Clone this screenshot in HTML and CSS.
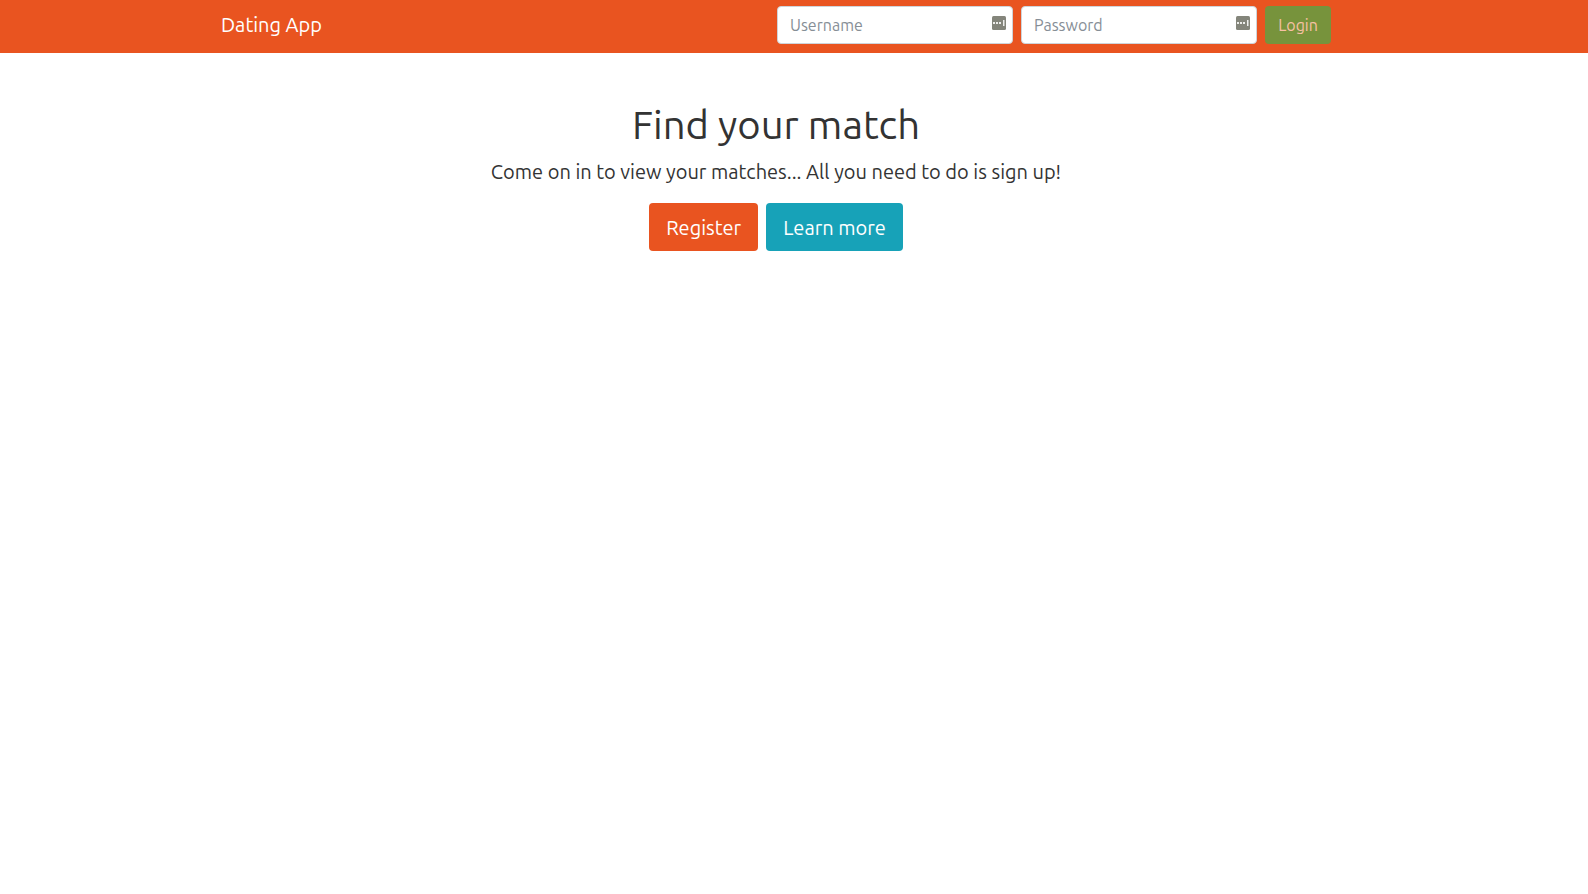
FILE: index.html
```html
<!DOCTYPE html>
<html lang="en">
<head>
<meta charset="utf-8">
<meta name="viewport" content="width=device-width, initial-scale=1">
<title>Dating App</title>
<link rel="stylesheet" href="styles.css">
</head>
<body>
<header class="navbar">
  <div class="container navbar-inner">
    <a class="brand" href="#">Dating App</a>
    <form class="login-form">
      <div class="field">
        <input class="form-control" type="text" name="username" placeholder="Username" aria-label="Username">
        <svg class="field-icon" viewBox="0 0 14 14" aria-hidden="true"><rect width="14" height="14" rx="1.5" fill="#84857b"/><path d="M1 6h2v2H1zM4 6h2v2H4zM7 6h2v2H7zM11 4h1.5v6H11z" fill="#fff" fill-opacity=".85"/></svg>
      </div>
      <div class="field">
        <input class="form-control" type="password" name="password" placeholder="Password" aria-label="Password">
        <svg class="field-icon" viewBox="0 0 14 14" aria-hidden="true"><rect width="14" height="14" rx="1.5" fill="#84857b"/><path d="M1 6h2v2H1zM4 6h2v2H4zM7 6h2v2H7zM11 4h1.5v6H11z" fill="#fff" fill-opacity=".85"/></svg>
      </div>
      <button class="btn btn-login" type="submit" disabled>Login</button>
    </form>
  </div>
</header>
<main class="page">
  <section class="container hero">
    <h1 class="title">Find your match</h1>
    <p class="lead">Come on in to view your matches... All you need to do is sign up!</p>
    <div class="actions">
      <button class="btn btn-lg btn-register" type="button">Register</button>
      <button class="btn btn-lg btn-info" type="button">Learn more</button>
    </div>
  </section>
</main>
</body>
</html>
```
FILE: styles.css
```css
*, *::before, *::after { box-sizing: border-box; }

body {
  margin: 0;
  background: #fff;
  color: #333;
  font-family: Ubuntu, "Noto Sans", sans-serif;
  font-size: 16px;
  line-height: 24px;
}

.navbar {
  padding: 6px 36px 9px 0;
  background: #e95420;
}

.page {
  padding: 48px 36px 0 0;
}

.container {
  width: 100%;
  max-width: 1140px;
  margin: 0 auto;
  padding: 0 15px;
}

.navbar-inner {
  display: flex;
  align-items: center;
  justify-content: space-between;
}

.brand {
  color: #fff;
  font-size: 20px;
  text-decoration: none;
}

.login-form {
  display: flex;
  gap: 8px;
}

.field {
  position: relative;
  width: 236px;
}

.form-control {
  display: block;
  width: 100%;
  height: 38px;
  padding: 6px 12px;
  border: 1px solid #ced4da;
  border-radius: 4px;
  background: #fff;
  color: #495057;
  font: inherit;
}

.form-control::placeholder {
  color: #868e96;
  opacity: 1;
}

.field-icon {
  position: absolute;
  top: 10px;
  right: 7px;
  width: 14px;
  height: 14px;
}

.btn {
  border: 0;
  border-radius: 4px;
  color: #fff;
  font-family: inherit;
  font-size: 16px;
}

.btn-login {
  width: 66px;
  height: 38px;
  padding: 0;
  background: #77933c;
  color: #f8c1a4;
}

.hero {
  text-align: center;
}

.title {
  margin: 0 0 8px;
  font-size: 40px;
  font-weight: 400;
  line-height: 48px;
}

.lead {
  margin: 0 0 16px;
  font-size: 20px;
  line-height: 30px;
}

.actions {
  display: flex;
  justify-content: center;
  gap: 8px;
}

.btn-lg {
  height: 48px;
  padding: 0 17px;
  font-size: 20px;
}

.btn-register { background: #e95420; }
.btn-info { background: #17a2b8; }
```
